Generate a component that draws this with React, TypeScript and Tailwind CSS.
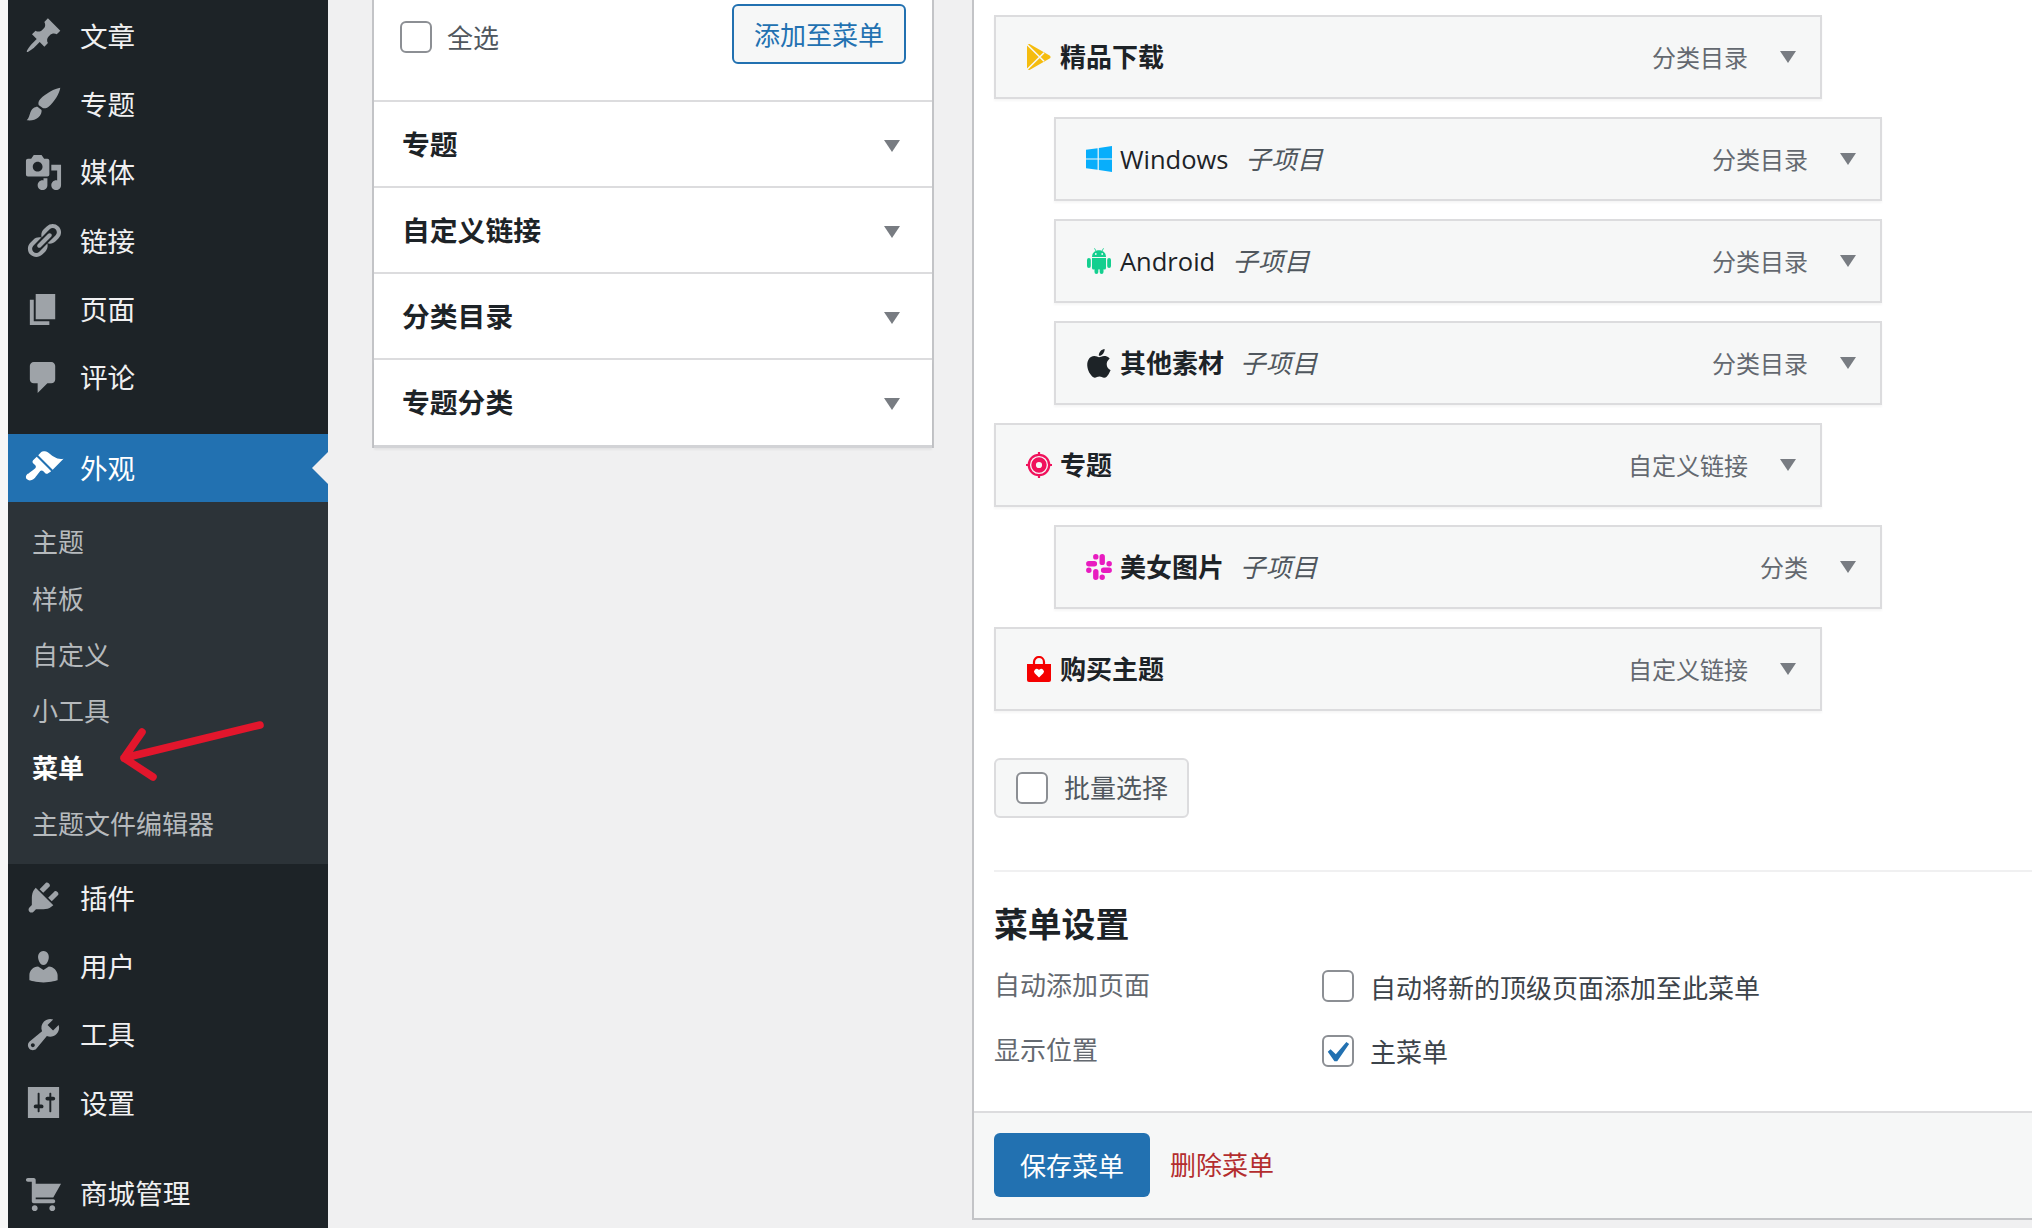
import React from "react";
import { RiAppleFill } from "react-icons/ri";

const D: Record<string, string> = {
  post: "M10.44 3.02l1.82-1.82 6.36 6.35-1.83 1.82c-1.05-.68-2.48-.57-3.41.36l-.75.75c-.92.93-1.04 2.35-.35 3.41l-1.83 1.82-2.41-2.41-2.8 2.79c-.42.42-3.38 2.71-3.8 2.29s1.86-3.39 2.28-3.81l2.79-2.79L4.1 9.36l1.83-1.82c1.05.69 2.48.57 3.4-.36l.75-.75c.93-.92 1.05-2.35.36-3.41z",
  brush: "M18.6 1.4c-.2 2.6-3.3 7.7-6 9.7-1 .8-2 1-3 .7l-2.1-1.6c-.3-1.2 0-2.2 1-3.2C11 4.5 16 1.6 18.6 1.4zM6.9 11.1l2.1 1.7c.2 1.2-.3 2.7-1.7 3.9-1.4 1.2-3.5 1.7-5.9 1.4 1.2-1 1.3-2.6 1.9-4.1.6-1.8 2.1-2.9 3.6-2.9z",
  media: "M13 11V4c0-.55-.45-1-1-1h-1.67L9 1H5L3.67 3H2c-.55 0-1 .45-1 1v7c0 .55.45 1 1 1h10c.55 0 1-.45 1-1zM7 4.5c1.38 0 2.5 1.12 2.5 2.5S8.38 9.5 7 9.5 4.5 8.38 4.5 7 5.62 4.5 7 4.5zM14 6h5v10.5c0 1.38-1.12 2.5-2.5 2.5S14 17.88 14 16.5s1.12-2.5 2.5-2.5c.17 0 .34.02.5.05V9h-3V6zm-4 8.05V13h2v3.5c0 1.38-1.12 2.5-2.5 2.5S7 17.88 7 16.5 8.12 14 9.5 14c.17 0 .34.02.5.05z",
  links: "M17.74 2.76c1.68 1.69 1.68 4.41 0 6.1l-1.53 1.52c-1.12 1.12-2.7 1.47-4.14 1.09l2.62-2.61.76-.77.76-.76c.84-.84.84-2.2 0-3.04-.84-.85-2.2-.85-3.04 0l-.77.76-3.38 3.38c-.37-1.44-.02-3.02 1.1-4.14l1.52-1.53c1.69-1.68 4.42-1.68 6.1 0zM8.59 13.43l5.34-5.34c.42-.42.42-1.1 0-1.52-.44-.43-1.13-.39-1.53 0l-5.33 5.34c-.42.42-.42 1.1 0 1.52.44.43 1.13.39 1.52 0zm-.76 2.29l4.14-4.15c.38 1.44.03 3.02-1.09 4.14l-1.52 1.53c-1.69 1.68-4.41 1.68-6.1 0-1.68-1.68-1.68-4.42 0-6.1l1.53-1.52c1.12-1.12 2.7-1.47 4.14-1.1l-4.14 4.15c-.85.84-.85 2.2 0 3.05.84.84 2.2.84 3.04 0z",
  page: "M6 15V2h10v13H6zm-1 1h8v2H3V5h2v11z",
  comments: "M5 2h9c1.1 0 2 .9 2 2v7c0 1.1-.9 2-2 2h-2l-5 5v-5H5c-1.1 0-2-.9-2-2V4c0-1.1.9-2 2-2z",
  appearance: "M14.48 11.06L7.41 3.99l1.5-1.5c.5-.56 2.3-.47 3.51.32 1.21.8 1.43 1.28 2.91 2.1 1.18.64 2.45 1.26 4.45.85zm-.71.71L6.7 4.7 4.93 6.47c-.39.39-.39 1.02 0 1.41l1.06 1.06c.39.39.39 1.03 0 1.42-.6.6-1.43 1.11-2.21 1.69-.35.26-.7.53-1.01.84C1.43 13.23 1 14.81 1.96 15.78c.97.96 2.55.53 3.91-.81.31-.31.58-.66.84-1.01.58-.78 1.09-1.61 1.69-2.21.39-.39 1.02-.39 1.41 0l1.06 1.06c.39.39 1.02.39 1.41 0z",
  plugins: "M13.11 4.36L9.87 7.6 8 5.73l3.24-3.24c.35-.34 1.05-.2 1.56.32.52.51.66 1.21.31 1.55zm-8 1.77l.91-1.12 9.01 9.01-1.19.84c-.71.71-2.63 1.16-3.82 1.16H6.14L4.9 17.26c-.59.59-1.54.59-2.12 0-.59-.58-.59-1.53 0-2.12l1.24-1.24v-3.88c0-1.13.4-3.19 1.09-3.89zm7.26 3.97l3.24-3.24c.34-.35 1.04-.21 1.55.31.52.51.66 1.21.31 1.55l-3.24 3.25z",
  users: "M10 9.25c-2.27 0-2.73-3.44-2.73-3.44C7 4.02 7.82 2 9.97 2c2.16 0 2.98 2.02 2.71 3.81 0 0-.41 3.44-2.68 3.44zm0 2.57L12.72 10c2.39 0 4.52 2.33 4.52 4.53v2.49s-3.65 1.13-7.24 1.13c-3.65 0-7.24-1.13-7.24-1.13v-2.49c0-2.25 1.94-4.48 4.47-4.48z",
  tools: "M16.68 9.77c-1.34 1.34-3.3 1.67-4.95.99l-5.41 6.52c-.99.99-2.59.99-3.58 0s-.99-2.59 0-3.57l6.52-5.42c-.68-1.65-.35-3.61.99-4.95 1.28-1.28 3.12-1.62 4.72-1.06l-2.89 2.89 2.82 2.82 2.86-2.87c.53 1.58.18 3.39-1.08 4.65zM3.81 16.21c.4.39 1.04.39 1.43 0 .4-.4.4-1.04 0-1.43-.39-.4-1.03-.4-1.43 0-.39.39-.39 1.03 0 1.43z",
  settings: "M2 2h16v16H2zM8 11h1c.55 0 1 .45 1 1s-.45 1-1 1H8v1.5c0 .28-.22.5-.5.5s-.5-.22-.5-.5V13H6c-.55 0-1-.45-1-1s.45-1 1-1h1V5.5c0-.28.22-.5.5-.5s.5.22.5.5V11zm5-2h-1c-.55 0-1-.45-1-1s.45-1 1-1h1V5.5c0-.28.22-.5.5-.5s.5.22.5.5V7h1c.55 0 1 .45 1 1s-.45 1-1 1h-1v5.5c0 .28-.22.5-.5.5s-.5-.22-.5-.5V9z",
  cart: "M6 13h9c.55 0 1 .45 1 1s-.45 1-1 1H5c-.55 0-1-.45-1-1V4H2c-.55 0-1-.45-1-1s.45-1 1-1h3c.55 0 1 .45 1 1v2h13l-4 7H6v1zm-.5 3c.83 0 1.5.67 1.5 1.5S6.33 19 5.5 19 4 18.33 4 17.5 4.67 16 5.5 16zm9 0c.83 0 1.5.67 1.5 1.5s-.67 1.5-1.5 1.5-1.5-.67-1.5-1.5.67-1.5 1.5-1.5z",
};

function MenuRow({ icon, label }: { icon: string; label: string }) {
  return (
    <div className="flex h-[68.6px] items-center pl-[16px] text-[27.6px] text-[#f0f0f1]">
      <svg viewBox="0 0 20 20" fill="#9ea3a8" fillRule="evenodd" className="mr-[17px] mb-[1px] h-[39px] w-[39px] shrink-0">
        <path d={D[icon]} />
      </svg>
      <span className="mb-[3px] leading-[36px]">{label}</span>
    </div>
  );
}

function Arrow() {
  return (
    <svg viewBox="0 0 16 12" className="h-[12px] w-[16px] shrink-0" fill="#787c82">
      <path d="M0 0H16L8 12Z" />
    </svg>
  );
}

function Box({ checked }: { checked?: boolean }) {
  return (
    <span className="flex h-[32px] w-[32px] shrink-0 items-center justify-center rounded-[6px] border-2 border-[#8c8f94] bg-white">
      {checked && (
        <svg viewBox="5.4 4.4 11.2 10.2" className="h-[21px] w-[23px]" fill="#2271b1">
          <path d="M14.83 4.89l1.34.94-5.81 8.38H9.02L5.78 9.67l1.34-1.25 2.57 2.4z" />
        </svg>
      )}
    </span>
  );
}

const PlayIcon = () => (
  <svg viewBox="0 0 24 26" className="h-[26px] w-[24px]">
    <path d="M0 2.2C0 .6 1.6-.5 3 .3L22.6 11.4c1.3.7 1.3 2.5 0 3.2L3 25.7c-1.4.8-3-.3-3-1.9z" fill="#f5bc0e" />
    <path d="M0 .5L17 17.2M0 25.5L17 8.8" stroke="#f6f7f7" strokeWidth="1.6" fill="none" />
  </svg>
);

const WindowsIcon = () => (
  <svg viewBox="0 0 26 26" className="h-[26px] w-[26px]" fill="#08aefb">
    <path d="M0 3.8L11.6 2.2V12.4H0zM12.8 2L26 0V12.4H12.8zM0 13.6H11.6V23.8L0 22.2zM12.8 13.6H26V26L12.8 24z" />
  </svg>
);

const AndroidIcon = () => (
  <svg viewBox="0 0 24 26" className="h-[26px] w-[24px]">
    <g fill="#14cf8f">
      <path d="M5 9C5 5 8 2.3 12 2.3S19 5 19 9z" />
      <path d="M5 10H19V20a1.6 1.6 0 0 1-1.6 1.6H6.600A1.6 1.6 0 0 1 5 20z" />
      <rect x="0" y="10" width="3.8" height="10" rx="1.9" />
      <rect x="20.200" y="10" width="3.8" height="10" rx="1.9" />
      <rect x="7.500" y="20" width="3.800" height="6" rx="1.900" />
      <rect x="12.700" y="20" width="3.800" height="6" rx="1.900" />
    </g>
    <path d="M7.500 0.300L9 3M16.500 0.300L15 3" stroke="#14cf8f" strokeWidth="0.9" />
    <circle cx="8.800" cy="6" r="0.900" fill="#f6f7f7" />
    <circle cx="15.200" cy="6" r="0.900" fill="#f6f7f7" />
  </svg>
);

const SlackIcon = () => (
  <svg viewBox="0 0 26 26" className="h-[26px] w-[26px]" fill="none" stroke="#e81cc0" strokeWidth="5.4" strokeLinecap="round">
    <path d="M2.800 9.800H8.400M9.800 2.800V2.900" />
    <path d="M16.200 2.800V8.400M23.200 9.800H23.100" />
    <path d="M23.200 16.200H17.600M16.200 23.200V23.100" />
    <path d="M9.800 23.200V17.600M2.800 16.200H2.900" />
  </svg>
);

const TargetIcon = () => (
  <svg viewBox="0 0 26 26" className="h-[26px] w-[26px]" fill="none" stroke="#f0125c">
    <circle cx="13" cy="13" r="10.200" strokeWidth="2.300" />
    <circle cx="13" cy="13" r="5.400" strokeWidth="4.600" />
    <path d="M13 0V4M13 22V26M0 13H4M22 13H26" strokeWidth="2.200" />
  </svg>
);

const BagIcon = () => (
  <svg viewBox="0 0 24 26" className="h-[26px] w-[24px]">
    <path d="M7 9V6a5 5 0 0 1 10 0v3" fill="none" stroke="#f50000" strokeWidth="2.200" />
    <path d="M0 8H24V24a2 2 0 0 1-2 2H2a2 2 0 0 1-2-2z" fill="#f50000" />
    <path d="M12 21.500l-4.300-4.200a2.700 2.700 0 0 1 3.800-3.800l.5.5.5-.5a2.700 2.700 0 0 1 3.800 3.800z" fill="#fff" />
  </svg>
);

function Item({ icon, title, type, child, latin }: { icon: React.ReactNode; title: string; type: string; child?: boolean; latin?: boolean }) {
  return (
    <div
      className={
        child
          ? "ml-[60px] flex h-[84px] w-[828px] items-center border-2 border-[#dcdcde] bg-[#f6f7f7] pr-[24px] pl-[30px] shadow-[0_2px_2px_rgba(0,0,0,0.04)]"
          : "flex h-[84px] w-[828px] items-center border-2 border-[#dcdcde] bg-[#f6f7f7] pr-[24px] pl-[30px] shadow-[0_2px_2px_rgba(0,0,0,0.04)]"
      }
    >
      <span className="mr-[8px] flex h-[26px] w-[26px] shrink-0 items-center justify-center">{icon}</span>
      <span
        className={
          latin
            ? "mb-[1px] font-['Open_Sans',sans-serif] text-[25.500px] leading-[34px] font-medium text-[#1d2327]"
            : "mb-[2px] text-[26px] leading-[34px] font-bold text-[#1d2327]"
        }
      >
        {title}
      </span>
      {child && <span className={latin ? "mb-[2px] ml-[17px] text-[25.800px] leading-[34px] text-[#50575e] italic" : "mb-[2px] ml-[16px] text-[25.800px] leading-[34px] text-[#50575e] italic"}>子项目</span>}
      <span className="ml-auto text-[24px] leading-[34px] text-[#646970]">{type}</span>
      <span className="ml-[32px] flex">
        <Arrow />
      </span>
    </div>
  );
}

function Accordion({ title, last }: { title: string; last?: boolean }) {
  return (
    <div
      className={
        last
          ? "flex h-[88px] items-center justify-between border-b-[3px] border-[#d2d3d6] pr-[32px] pl-[28px] shadow-[0_2px_2px_rgba(0,0,0,0.05)]"
          : "flex h-[86px] items-center justify-between border-b-2 border-[#dcdcde] pr-[32px] pl-[28px]"
      }
    >
      <span className={last ? "mb-[4px] text-[27.800px] leading-[36px] font-bold text-[#1d2327]" : "mb-[3px] text-[27.800px] leading-[36px] font-bold text-[#1d2327]"}>{title}</span>
      <span className="flex pt-[3px]">
        <Arrow />
      </span>
    </div>
  );
}

export default function App() {
  return (
    <div className="relative flex h-[1228px] w-full overflow-hidden bg-[#f0f0f1] font-['Noto_Sans_CJK_SC','Noto_Sans',sans-serif]">
      <div className="w-[8px] shrink-0 bg-[#f7f7f7]" />

      <aside className="flex w-[320px] shrink-0 flex-col bg-[#1d2327] pt-[2px]">
        <MenuRow icon="post" label="文章" />
        <MenuRow icon="brush" label="专题" />
        <MenuRow icon="media" label="媒体" />
        <MenuRow icon="links" label="链接" />
        <MenuRow icon="page" label="页面" />
        <MenuRow icon="comments" label="评论" />
        <div className="relative mt-[22px] flex h-[68px] items-center bg-[#2271b1] pl-[15px] text-[27.600px] text-white">
          <svg viewBox="0 0 20 20" fill="#fff" className="mr-[16px] h-[41px] w-[41px] shrink-0">
            <path d={D.appearance} />
          </svg>
          <span className="mb-[2px] leading-[36px]">外观</span>
          <span className="absolute top-[18px] right-0 h-0 w-0 border-y-[16px] border-r-[16px] border-y-transparent border-r-[#f0f0f1]" />
        </div>
        <div className="flex h-[363.500px] flex-col bg-[#2c3338] pt-[11px] pl-[24px] text-[26px] text-[#b6babd]">
          {["主题", "样板", "自定义", "小工具", "菜单", "主题文件编辑器"].map((t) => (
            <div key={t} className={t === "菜单" ? "flex h-[56.300px] items-center font-semibold text-white" : "flex h-[56.300px] items-center"}>
              {t}
            </div>
          ))}
        </div>
        <MenuRow icon="plugins" label="插件" />
        <MenuRow icon="users" label="用户" />
        <MenuRow icon="tools" label="工具" />
        <MenuRow icon="settings" label="设置" />
        <div className="mt-[22px]">
          <MenuRow icon="cart" label="商城管理" />
        </div>
      </aside>

      <main className="flex min-w-0 flex-1 items-start pl-[44px]">
        <section className="w-[562px] shrink-0 border-x-2 border-[#c3c4c7] bg-white">
          <div className="flex h-[102px] items-start border-b-2 border-[#dcdcde] pr-[26px] pl-[26px]">
            <span className="mt-[21px] flex items-center">
              <Box />
              <span className="ml-[15px] text-[26px] leading-[32px] text-[#50575e]">全选</span>
            </span>
            <button className="mt-[4px] ml-auto flex h-[60px] w-[174px] items-center justify-center rounded-[6px] border-2 border-[#2271b1] bg-[#f6f7f7] pb-[2px] text-[26px] text-[#2271b1]">
              添加至菜单
            </button>
          </div>
          <Accordion title="专题" />
          <Accordion title="自定义链接" />
          <Accordion title="分类目录" />
          <Accordion title="专题分类" last />
        </section>

        <section className="ml-[38px] flex h-[1220px] min-w-0 flex-1 flex-col border-b-2 border-l-2 border-[#c3c4c7] bg-white pt-[15px]">
          <div className="flex flex-col gap-[18px] pl-[20px]">
            <Item title="精品下载" type="分类目录" icon={<PlayIcon />} />
            <Item child latin title="Windows" type="分类目录" icon={<WindowsIcon />} />
            <Item child latin title="Android" type="分类目录" icon={<AndroidIcon />} />
            <Item child title="其他素材" type="分类目录" icon={<RiAppleFill className="h-[31px] w-[31px] shrink-0 text-[#1d2327]" />} />
            <Item title="专题" type="自定义链接" icon={<TargetIcon />} />
            <Item child title="美女图片" type="分类" icon={<SlackIcon />} />
            <Item title="购买主题" type="自定义链接" icon={<BagIcon />} />
          </div>

          <div className="mt-[47px] ml-[20px] flex h-[60px] w-[195px] items-center rounded-[6px] border-2 border-[#dcdcde] bg-[#f6f7f7] pl-[20px]">
            <Box />
            <span className="mb-[2px] ml-[16px] text-[26px] leading-[34px] text-[#50575e]">批量选择</span>
          </div>

          <div className="mt-[52px] ml-[20px] border-t-2 border-[#f0f0f1]" />

          <h3 className="mt-[31px] ml-[20px] text-[33.800px] leading-[40px] font-bold text-[#1d2327]">菜单设置</h3>

          <div className="mt-[25px] ml-[20px] flex h-[36px] items-center">
            <span className="mb-[5px] w-[328px] text-[26px] leading-[34px] text-[#646970]">自动添加页面</span>
            <Box />
            <span className="mt-[2px] ml-[16px] text-[26px] leading-[34px] text-[#3c434a]">自动将新的顶级页面添加至此菜单</span>
          </div>
          <div className="mt-[29px] ml-[20px] flex h-[36px] items-center">
            <span className="mb-[4px] w-[328px] text-[26px] leading-[34px] text-[#646970]">显示位置</span>
            <Box checked />
            <span className="ml-[16px] text-[26px] leading-[34px] text-[#3c434a]">主菜单</span>
          </div>

          <div className="mt-auto flex h-[107px] items-center border-t-2 border-[#dcdcde] bg-[#f6f7f7] pb-[1px] pl-[20px]">
            <button className="flex h-[64px] w-[156px] items-center justify-center rounded-[6px] bg-[#2271b1] pb-[2px] text-[26px] text-white">保存菜单</button>
            <span className="mb-[3px] ml-[20px] text-[26px] leading-[34px] text-[#b32d2e]">删除菜单</span>
          </div>
        </section>
      </main>

      <svg className="pointer-events-none absolute top-[720px] left-[115px] h-[64px] w-[155px]" viewBox="115 720 155 64" fill="none" stroke="#e2162c" strokeWidth="7.500" strokeLinecap="round" strokeLinejoin="round">
        <path d="M260 725L124 758M142 732L124 758L153 777" />
      </svg>
    </div>
  );
}
